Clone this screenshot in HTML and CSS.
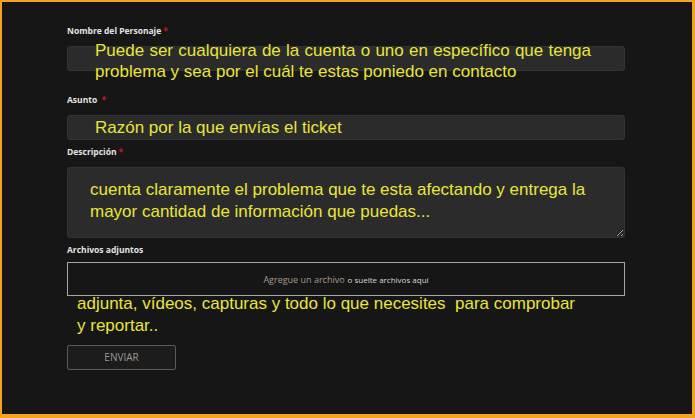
FILE: index.html
```html
<!DOCTYPE html>
<html lang="es">
<head>
  <meta charset="UTF-8">
  <title>Nuevo ticket</title>
  <link rel="stylesheet" href="styles.css">
</head>
<body>
  <div class="frame">
    <form id="ticket-form" class="ticket-form">
      <div class="form-group gap-lg">
        <label for="personaje">Nombre del Personaje<span class="req">*</span></label>
        <div class="field-wrap">
          <input type="text" id="personaje" name="personaje">
          <span class="note note-over"><span class="wide">Puede ser cualquiera de la cuenta o uno en específico que tenga</span><br>problema y sea por el cuál te estas poniedo en contacto</span>
        </div>
      </div>
      <div class="form-group">
        <label for="asunto">Asunto <span class="req">*</span></label>
        <input type="text" id="asunto" name="asunto" class="note-input" value="Razón por la que envías el ticket">
      </div>
      <div class="form-group">
        <label for="descripcion">Descripción<span class="req">*</span></label>
        <textarea id="descripcion" name="descripcion">cuenta claramente el problema que te esta afectando y entrega la mayor cantidad de información que puedas...</textarea>
      </div>
      <div class="form-group last">
        <label class="label-files">Archivos adjuntos</label>
        <div class="dropzone">
          <span class="drop-link">Agregue un archivo</span> <span class="drop-rest">o suelte archivos aquí</span>
        </div>
      </div>
      <p class="note note-files">adjunta, vídeos, capturas y todo lo que necesites&nbsp; para comprobar<br>y reportar..</p>
      <button type="submit">ENVIAR</button>
    </form>
  </div>
</body>
</html>
```

FILE: styles.css
```css
* {
  box-sizing: border-box;
}

body {
  margin: 0;
  background-color: #161616;
  font-family: "Open Sans", Arial, sans-serif;
}

.frame {
  width: 695px;
  height: 418px;
  border-style: solid;
  border-color: #f2a41c;
  border-width: 2px 3px 4px 2px;
  background-color: #161616;
  padding: 23px 0 0 65px;
}

.ticket-form {
  width: 558px;
}

.form-group {
  margin-bottom: 6px;
}

.form-group.gap-lg {
  margin-bottom: 23px;
}

.form-group.last {
  margin-bottom: 0;
}

.form-group label {
  display: block;
  font-family: "Open Sans", sans-serif;
  font-weight: bold;
  font-size: 8.5px;
  line-height: 12px;
  color: #e4e4e4;
  margin-bottom: 9px;
}

.form-group label.label-files {
  margin-bottom: 6px;
}

.req {
  color: #c8102e;
  margin-left: 2px;
}

.field-wrap {
  position: relative;
}

.form-group input,
.form-group textarea {
  display: block;
  width: 100%;
  height: 25px;
  background-color: #2b2b2b;
  border: 1px solid #333;
  border-radius: 3px;
  outline: none;
  padding: 0 0 0 27px;
}

.form-group textarea {
  height: 71px;
  padding: 11px 22px;
  resize: vertical;
}

.note,
.note-input,
.form-group textarea {
  font-family: "Liberation Sans", Arial, sans-serif;
  font-size: 17px;
  line-height: 22px;
  color: #e9e53a;
}

.note-over {
  position: absolute;
  left: 28px;
  top: -6px;
  line-height: 21px;
  white-space: nowrap;
}

.note-over .wide {
  word-spacing: 0.5px;
}

.dropzone {
  height: 34px;
  border: 1px solid #a6a6a6;
  display: flex;
  align-items: center;
  justify-content: center;
  gap: 3px;
  font-size: 8.5px;
}

.drop-link {
  color: #a89a8c;
  font-size: 9px;
}

.drop-rest {
  color: #d8d8d8;
  font-size: 8px;
}

.note-files {
  margin: -3px 0 7px 10px;
}

button {
  width: 109px;
  height: 25px;
  background-color: #1c1c1c;
  border: 1px solid #5a5a5a;
  border-radius: 2px;
  color: #9e9890;
  font-family: "Open Sans", sans-serif;
  font-size: 10px;
  cursor: pointer;
}
```
